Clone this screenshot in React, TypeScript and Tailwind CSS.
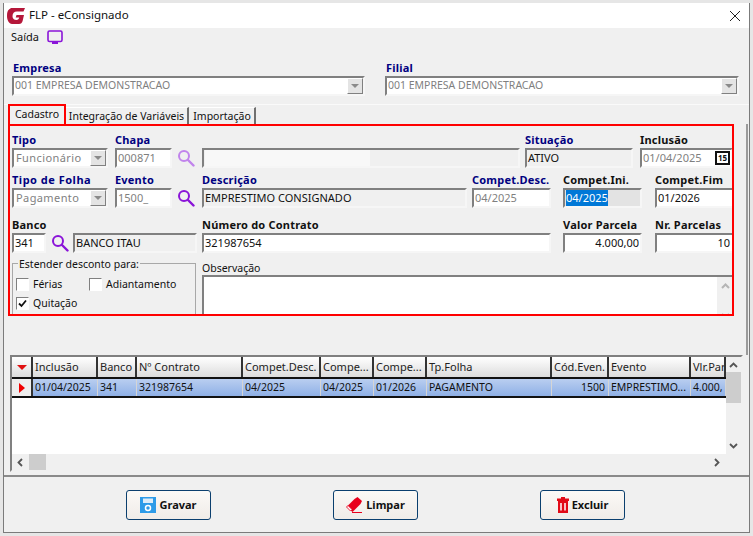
import type { ReactNode } from "react"

const FONT = "font-['Noto_Sans',sans-serif]"
const SUNKEN = "border-2 border-t-[#808080] border-l-[#808080] border-b-[#f6f6f6] border-r-[#f6f6f6]"

function SearchIcon({ light = false }: { light?: boolean }) {
  const c = light ? "#c184ec" : "#8a14d8"
  return (
    <svg width="18" height="18" viewBox="0 0 18 18" fill="none" className="shrink-0">
      <circle cx="7" cy="7" r="5" stroke={c} strokeWidth="2" />
      <path d="M11 11l5.5 5.5" stroke={c} strokeWidth="2.4" strokeLinecap="round" />
    </svg>
  )
}

function Logo() {
  return (
    <svg width="18" height="16" viewBox="0 0 18 16" className="shrink-0">
      <path d="M2 1.5C0.5 2.5 0 5 0 8c0 4 2 8 5 8h7c2 0 3-1 3.6-3l1.4-6H9.5L8.7 9.5h3.5c-.4 1.5-1 2.5-2.7 2.5-2.5 0-4-1.500-4-3.800C5.500 5.500 7 3.500 10 3.500h6.500L18 0H5C3.800 0 2.800.6 2 1.500z" fill="#b5173a" />
    </svg>
  )
}

function Arrow() {
  return (
    <div className="flex h-full w-[16px] shrink-0 items-center justify-center border border-b-[#808080] border-r-[#808080] border-t-white border-l-white bg-[#e4e4e4]">
      <div className="h-0 w-0 border-x-[4px] border-t-[4px] border-x-transparent border-t-[#8a8a8a]" />
    </div>
  )
}

function Combo({ value, className = "text-[11px] tracking-[0.4px] pl-[2px]" }: { value: string; className?: string }) {
  return (
    <div className={`flex h-[20px] items-center bg-white text-[#7f7f7f] ${SUNKEN} ${className}`}>
      <span className="flex-1 truncate">{value}</span>
      <Arrow />
    </div>
  )
}

function Input({ value, className = "", tone = "bg-white text-[#111]", children }: { value?: string; className?: string; tone?: string; children?: ReactNode }) {
  return (
    <div className={`flex h-[20px] items-center overflow-hidden whitespace-nowrap pl-px text-[11px] ${SUNKEN} ${tone} ${className}`}>
      {value}
      {children}
    </div>
  )
}

function Label({ children, color = "text-[#000080]" }: { children: ReactNode; color?: string }) {
  return <div className={`h-[14px] whitespace-nowrap text-[11px] leading-[12px] font-bold tracking-[0.2px] ${color}`}>{children}</div>
}

function Field({ label, color, className, children }: { label: string; color?: string; className: string; children: ReactNode }) {
  return (
    <div className={`shrink-0 ${className}`}>
      <Label color={color}>{label}</Label>
      {children}
    </div>
  )
}

function Check({ checked = false }: { checked?: boolean }) {
  return (
    <div className="flex h-[13px] w-[13px] shrink-0 items-center justify-center border border-t-[#808080] border-l-[#808080] border-b-white border-r-white bg-white">
      {checked && (
        <svg width="9" height="9" viewBox="0 0 9 9" fill="none">
          <path d="M1 4.500l2.500 2.500L8 1.500" stroke="#111" strokeWidth="1.800" />
        </svg>
      )}
    </div>
  )
}

const COLUMNS = [
  { title: "Inclusão", value: "01/04/2025", w: "w-[65px]" },
  { title: "Banco", value: "341", w: "w-[39px]" },
  { title: "Nº Contrato", value: "321987654", w: "w-[106px]" },
  { title: "Compet.Desc.", value: "04/2025", w: "w-[78px]" },
  { title: "Compe...", value: "04/2025", w: "w-[53px]" },
  { title: "Compe...", value: "01/2026", w: "w-[53px]" },
  { title: "Tp.Folha", value: "PAGAMENTO", w: "w-[125px]" },
  { title: "Cód.Even.", value: "1500", w: "w-[57px]", right: true },
  { title: "Evento", value: "EMPRESTIMO...", w: "w-[82px]" },
  { title: "Vlr.Par", value: "4.000,", w: "w-[35px]" },
]

function ActionButton({ label, icon, className = "" }: { label: string; icon: ReactNode; className?: string }) {
  return (
    <div className={`flex h-[30px] w-[85px] items-center justify-center gap-[3px] rounded-[3px] border border-[#0b3f6e] bg-gradient-to-b from-[#fbf9f6] to-[#f0ece8] text-[11px] font-bold text-[#111] ${className}`}>
      {icon}
      {label}
    </div>
  )
}

export default function App() {
  return (
    <div className={`h-[536px] w-[753px] overflow-hidden bg-[#e6e6e6] pl-[3px] pt-[3px] ${FONT}`}>
      <div className="flex h-[530px] w-[747px] flex-col border-x border-b border-[#7b7b7b] bg-[#f0f0f0]">
        {/* barra de titulo */}
        <div className="flex h-[25px] shrink-0 items-center bg-white pl-[3px] pr-[8px] text-[11.500px] text-[#111]">
          <Logo />
          <span className="-mt-[2px] ml-[4px] flex-1">FLP - eConsignado</span>
          <svg width="12" height="12" viewBox="0 0 12 12" fill="none">
            <path d="M1 1l10 10M11 1L1 11" stroke="#222" strokeWidth="1" />
          </svg>
        </div>

        <div className="flex h-[18px] items-center pl-[7px] text-[11px] text-[#111]">
          Saída
          <svg width="16" height="15" viewBox="0 0 16 15" fill="none" className="ml-[8px]">
            <rect x="1" y="1" width="14" height="10.500" rx="1.500" stroke="#8a14d8" strokeWidth="1.600" />
            <path d="M5 13h6" stroke="#8a14d8" strokeWidth="2" />
          </svg>
        </div>

        {/* empresa / filial */}
        <div className="mt-[15px] flex pl-[8px]">
          <Field label="Empresa" className="w-[353px] [&>div:first-child]:h-[15px] [&>div:first-child]:pl-px [&>div:first-child]:leading-[14px]">
            <Combo value="001 EMPRESA DEMONSTRACAO" className="pl-px text-[10.500px]" />
          </Field>
          <Field label="Filial" className="ml-[20px] w-[354px] [&>div:first-child]:h-[15px] [&>div:first-child]:pl-px [&>div:first-child]:leading-[14px]">
            <Combo value="001 EMPRESA DEMONSTRACAO" className="pl-px text-[10.500px]" />
          </Field>
        </div>

        {/* abas */}
        <div className="mt-[8px] flex h-[20px] items-end border-t border-[#fafafa] pl-[4px] text-[10.500px] text-[#111]">
          <div className="z-10 flex h-[20px] w-[58px] items-center justify-center border-2 border-b-0 border-[#ff0000] bg-[#f0f0f0] pb-px">Cadastro</div>
          <div className="flex h-[17px] w-[123px] items-center justify-center whitespace-nowrap border-r-2 border-t border-r-[#707070] border-t-white pt-[2px]">Integração de Variáveis</div>
          <div className="ml-px flex h-[17px] w-[66px] items-center justify-center border-r-2 border-t border-r-[#707070] border-t-white pt-[2px]">Importação</div>
        </div>

        {/* cadastro */}
        <div className="flex h-[231px] w-[744px] shrink-0 items-start border-r-2 border-[#9a9a9a]">
          <div className="ml-[4px] h-[192px] w-[726px] overflow-hidden border-2 border-[#ff0000] px-[2px] pt-[8px]">
            <div className="flex">
              <Field label="Tipo" className="w-[96px]"><Combo value="Funcionário" /></Field>
              <Field label="Chapa" className="ml-[7px] w-[57px]"><Input value="000871" tone="bg-white text-[#7f7f7f]" /></Field>
              <div className="ml-[5px] mt-[15px] w-[18px] shrink-0"><SearchIcon light /></div>
              <div className="ml-[7px] mt-[14px] shrink-0">
                <Input className="w-[318px]" tone="bg-[#f0f0f0]">
                  <div className="h-full w-[165px] bg-[#f8f8f8]" />
                </Input>
              </div>
              <Field label="Situação" className="ml-[5px] w-[108px]"><Input value="ATIVO" tone="bg-[#f0f0f0] text-[#111]" /></Field>
              <Field label="Inclusão" color="text-[#111]" className="ml-[7px] w-[93px]">
                <div className={`flex h-[20px] items-center bg-white pl-[1px] text-[11px] text-[#7f7f7f] ${SUNKEN}`}>
                  <span className="flex-1">01/04/2025</span>
                  <span className="mr-px h-[14px] w-[15px] shrink-0 border-2 border-[#111] bg-white text-center text-[8px] leading-[10px] font-bold text-[#111]">15</span>
                </div>
              </Field>
            </div>

            <div className="mt-[6px] flex">
              <Field label="Tipo de Folha" className="w-[96px] [&>div:first-child]:tracking-[0.5px]"><Combo value="Pagamento" /></Field>
              <Field label="Evento" className="ml-[7px] w-[57px]"><Input value="1500_" tone="bg-white text-[#7f7f7f]" className="pl-[3px]" /></Field>
              <div className="ml-[5px] mt-[15px] w-[18px] shrink-0"><SearchIcon /></div>
              <Field label="Descrição" className="ml-[7px] w-[265px]"><Input value="EMPRESTIMO CONSIGNADO" tone="bg-[#f0f0f0] text-[#111]" /></Field>
              <Field label="Compet.Desc." className="ml-[5px] w-[79px]"><Input value="04/2025" tone="bg-white text-[#7f7f7f]" /></Field>
              <Field label="Compet.Ini." color="text-[#111]" className="ml-[12px] w-[79px]">
                <div className={`flex h-[20px] items-center bg-[#e3e3e3] pl-px text-[11px] ${SUNKEN}`}>
                  <span className="bg-[#0078d7] text-white">04/2025</span>
                </div>
              </Field>
              <Field label="Compet.Fim" color="text-[#111]" className="ml-[13px] w-[79px]"><Input value="01/2026" /></Field>
            </div>

            <div className="mt-[11px] flex">
              <Field label="Banco" color="text-[#111]" className="w-[34px]"><Input value="341" /></Field>
              <div className="ml-[5px] mt-[15px] w-[18px] shrink-0"><SearchIcon /></div>
              <div className="ml-[4px] mt-[14px] shrink-0"><Input value="BANCO ITAU" className="w-[124px]" tone="bg-[#f0f0f0] text-[#111]" /></div>
              <Field label="Número do Contrato" color="text-[#111]" className="ml-[5px] w-[349px]"><Input value="321987654" /></Field>
              <Field label="Valor Parcela" color="text-[#111]" className="ml-[12px] w-[79px]">
                <Input value="4.000,00" className="justify-end pr-px" />
              </Field>
              <Field label="Nr. Parcelas" color="text-[#111]" className="ml-[13px] w-[79px]">
                <Input value="10" className="justify-end pr-[2px]" />
              </Field>
            </div>

            <div className="mt-[10px] flex">
              <div className="relative h-[60px] w-[184px] shrink-0 border border-[#a8a8a8] pl-[3px] pt-[14px] text-[10.500px] leading-[13px] text-[#111]">
                <span className="absolute -top-[7px] left-[5px] bg-[#f0f0f0] px-px leading-[14px]">Estender desconto para:</span>
                <div className="flex items-center gap-[4px]">
                  <Check />
                  <span className="w-[52px]">Férias</span>
                  <Check />
                  <span>Adiantamento</span>
                </div>
                <div className="mt-[6px] flex items-center gap-[4px]">
                  <Check checked />
                  <span>Quitação</span>
                </div>
              </div>
              <div className="ml-[6px] w-[531px] shrink-0">
                <div className="h-[12px] text-[10.500px] leading-[10px] text-[#111]">Observação</div>
                <div className="flex h-[50px] justify-end border-l-2 border-t-2 border-l-[#808080] border-t-[#808080] bg-white">
                  <div className="flex w-[16px] flex-col items-center justify-between bg-[#f0f0f0] py-[6px] text-[#b5b5b5]">
                    <svg width="9" height="6" viewBox="0 0 9 6" fill="none"><path d="M1 5l3.500-3.500L8 5" stroke="currentColor" strokeWidth="2" /></svg>
                    <svg width="9" height="6" viewBox="0 0 9 6" fill="none"><path d="M1 1l3.500 3.500L8 1" stroke="currentColor" strokeWidth="2" /></svg>
                  </div>
                </div>
              </div>
            </div>
          </div>
        </div>

        {/* grade */}
        <div className="ml-[6px] flex h-[117px] w-[733px] shrink-0 flex-col border-2 border-b-[#f0f0f0] border-l-[#808080] border-r-[#f0f0f0] border-t-[#808080] bg-white">
          <div className="flex min-h-0 flex-1">
            <div className="min-w-0 flex-1 overflow-hidden">
              <div className="flex h-[22px] border-b-2 border-[#111] text-[11px] text-[#222]">
                <div className="flex w-[21px] shrink-0 items-center justify-center border-r-2 border-[#333] bg-gradient-to-b from-white to-[#dcdcdc]">
                  <div className="h-0 w-0 border-x-[5px] border-t-[5px] border-x-transparent border-t-[#e01010]" />
                </div>
                {COLUMNS.map((c, i) => (
                  <div key={i} className={`flex shrink-0 items-center overflow-hidden whitespace-nowrap border-r-2 border-[#333] bg-gradient-to-b from-white to-[#dcdcdc] pl-[2px] pt-px ${c.w}`}>{c.title}</div>
                ))}
              </div>
              <div className="flex h-[19px] border-b-2 border-[#111] text-[10.500px] text-[#111]">
                <div className="flex w-[21px] shrink-0 items-center justify-center border-r-2 border-[#333] bg-[#eeeeee]">
                  <div className="h-0 w-0 border-y-[5px] border-l-[6px] border-y-transparent border-l-[#f00000]" />
                </div>
                {COLUMNS.map((c, i) => (
                  <div key={i} className={`flex shrink-0 items-center overflow-hidden whitespace-nowrap border-r border-[#d5d5d5] bg-gradient-to-b from-[#b9cef0] to-[#8fb0e6] pl-[2px] pt-px ${c.w} ${c.right ? "justify-end pr-[3px]" : ""}`}>{c.value}</div>
                ))}
              </div>
            </div>
            <div className="flex w-[15px] shrink-0 flex-col items-center bg-[#f0f0f0] text-[#555]">
              <svg width="9" height="6" viewBox="0 0 9 6" fill="none" className="mt-[5px]"><path d="M1 5l3.500-3.500L8 5" stroke="currentColor" strokeWidth="1.800" /></svg>
              <div className="mt-[4px] h-[31px] w-full bg-[#cdcdcd]" />
              <svg width="9" height="6" viewBox="0 0 9 6" fill="none" className="mb-[5px] mt-auto"><path d="M1 1l3.500 3.500L8 1" stroke="currentColor" strokeWidth="1.800" /></svg>
            </div>
          </div>
          <div className="flex h-[16px] shrink-0 items-center bg-[#f0f0f0] pl-[5px] text-[#555]">
            <svg width="6" height="9" viewBox="0 0 6 9" fill="none"><path d="M5 1L1.500 4.500 5 8" stroke="currentColor" strokeWidth="1.800" /></svg>
            <div className="ml-[6px] h-full w-[17px] bg-[#cdcdcd]" />
            <svg width="6" height="9" viewBox="0 0 6 9" fill="none" className="ml-auto mr-[21px]"><path d="M1 1l3.500 3.500L1 8" stroke="currentColor" strokeWidth="1.800" /></svg>
          </div>
        </div>

        {/* rodape */}
        <div className="mt-[3px] flex flex-1 items-start border-t-2 border-[#8a8a8a] pl-[122px] pt-[13px]">
          <ActionButton
            label="Gravar"
            icon={
              <svg width="16" height="16" viewBox="0 0 16 16">
                <rect width="16" height="16" fill="#2d9be8" />
                <rect x="3" y="1.500" width="10" height="4.500" fill="#dcecf8" />
                <circle cx="8" cy="11" r="2.500" fill="none" stroke="#fff" strokeWidth="1.500" />
              </svg>
            }
          />
          <ActionButton
            className="ml-[122px]"
            label="Limpar"
            icon={
              <svg width="17" height="16" viewBox="0 0 17 16">
                <path d="M0.500 10l8-8 3-2 4.500 4-1.500 3-8 8z" fill="#e8001c" />
                <path d="M0.500 10l4 4 1.500-1.500-4-4z" fill="#fff" stroke="#e8001c" strokeWidth="0.800" />
                <path d="M6 15.500h10" stroke="#e8001c" strokeWidth="1" />
              </svg>
            }
          />
          <ActionButton
            className="ml-[122px]"
            label="Excluir"
            icon={
              <svg width="12" height="16" viewBox="0 0 12 16">
                <path d="M4 0h4v1.500h4V4H0V1.500h4z" fill="#e20a16" />
                <path d="M1 4h10v12H1z" fill="#e20a16" />
                <path d="M4 6v7.500M8 6v7.500" stroke="#fff" strokeWidth="1.500" />
              </svg>
            }
          />
        </div>
      </div>
    </div>
  )
}
